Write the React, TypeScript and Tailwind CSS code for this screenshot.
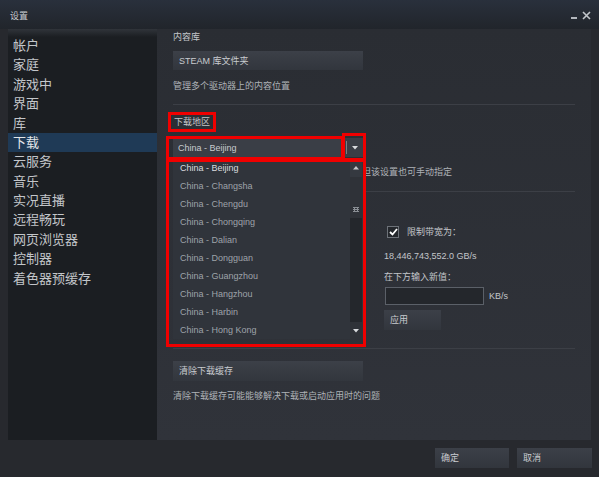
import React from "react";

const navItems = [
  "帐户",
  "家庭",
  "游戏中",
  "界面",
  "库",
  "下载",
  "云服务",
  "音乐",
  "实况直播",
  "远程畅玩",
  "网页浏览器",
  "控制器",
  "着色器预缓存",
];

const regions = [
  "China - Beijing",
  "China - Changsha",
  "China - Chengdu",
  "China - Chongqing",
  "China - Dalian",
  "China - Dongguan",
  "China - Guangzhou",
  "China - Hangzhou",
  "China - Harbin",
  "China - Hong Kong",
];

const TriDown = () => (
  <svg width="6" height="4" viewBox="0 0 6 4">
    <polygon points="0,0 6,0 3,3.5" fill="#d8dadd" />
  </svg>
);

const TriUp = () => (
  <svg width="6" height="4" viewBox="0 0 6 4">
    <polygon points="0,3.5 6,3.5 3,0" fill="#c4c7ca" />
  </svg>
);

const SteamButton = ({ label, className = "" }: { label: string; className?: string }) => (
  <div
    className={`flex items-center pl-[6px] bg-gradient-to-b from-[#3c4048] to-[#32363d] text-[#c9ccd0] ${className}`}
  >
    {label}
  </div>
);

export default function App() {
  return (
    <div className="w-[599px] h-[477px] flex flex-col overflow-hidden bg-[#27292e] text-[#c3c6ca] font-['Liberation_Sans','Noto_Sans_CJK_SC',sans-serif]">
      {/* Title bar */}
      <div className="h-[29px] flex items-center justify-between pl-[10px] pr-[8px] bg-gradient-to-b from-[#29303c] to-[#21252b]">
        <span className="text-[9px] leading-[12px] text-[#c9ccd0] mt-[2px]">设置</span>
        <div className="flex items-end gap-[5px] mt-[2px]">
          <div className="w-[6px] h-[2px] bg-[#b3b7bd] mb-[1px]" />
          <svg width="9" height="9" viewBox="0 0 9 9">
            <path d="M1 1 L8 8 M8 1 L1 8" stroke="#c2c6cb" strokeWidth="1.6" />
          </svg>
        </div>
      </div>

      {/* Body */}
      <div className="flex h-[411px] px-[8px]">
        {/* Sidebar */}
        <div className="w-[149px] pt-[7px] bg-[linear-gradient(#30343a,#1b1e22_8px)]">
          {navItems.map((item) => (
            <div
              key={item}
              className={`h-[19.4px] flex items-center pl-[5px] text-[13px] ${
                item === "下载" ? "bg-[#1f3a56] text-[#e3e6e9]" : "text-[#c3c6ca]"
              }`}
            >
              {item}
            </div>
          ))}
        </div>

        {/* Content */}
        <div className="relative flex-1 px-[16px] pt-[2px] text-[9px] leading-[12px] bg-gradient-to-b from-[#2a2d33] to-[#30333a]">
          <p>内容库</p>
          <SteamButton label="STEAM 库文件夹" className="mt-[8px] w-[190px] h-[19px]" />
          <p className="mt-[10px] text-[#aeb2b7]">管理多个驱动器上的内容位置</p>
          <div className="mt-[12px] h-px bg-[#3c3f46]" />

          <p className="mt-[11px] pl-[1px]">下载地区</p>
          <div className="mt-[10px] w-[190px] h-[19px] flex items-center bg-[#3a3e46]">
            <span className="flex-1 pl-[5px] text-[#c8cbce]">China - Beijing</span>
            <div className="w-px h-[13px] bg-[#7a7f86]" />
            <div className="w-[16px] flex justify-center">
              <TriDown />
            </div>
          </div>
          {/* description mostly hidden behind the open list */}
          <p className="mt-[9px] pl-[189px] whitespace-nowrap text-[#aeb2b7]">但该设置也可手动指定</p>
          <div className="mt-[13px] h-px bg-[#3c3f46]" />

          <div className="flex">
            <div className="w-[211px]" />
            <div className="pt-[34px]">
              <div className="flex items-center h-[12px]">
                <div className="ml-[3px] w-[12px] h-[12px] flex items-center justify-center bg-[#24272c] border border-[#6d7279]">
                  <svg width="9" height="8" viewBox="0 0 9 8">
                    <path d="M1 4 L3.5 6.5 L8 1" stroke="#ffffff" strokeWidth="1.8" fill="none" />
                  </svg>
                </div>
                <span className="ml-[8px]">限制带宽为：</span>
              </div>
              <p className="mt-[12px]">18,446,743,552.0 GB/s</p>
              <p className="mt-[9px]">在下方输入新值：</p>
              <div className="mt-[4px] flex items-center">
                <div className="ml-[1px] w-[99px] h-[18px] border border-[#5b6068] bg-[#24272c]" />
                <span className="ml-[5px]">KB/s</span>
              </div>
              <SteamButton label="应用" className="mt-[5px] w-[57px] h-[20px]" />
            </div>
          </div>
          <div className="mt-[18px] h-px bg-[#3c3f46]" />

          <SteamButton label="清除下载缓存" className="mt-[12px] w-[190px] h-[20px]" />
          <p className="mt-[9px] text-[#aeb2b7]">清除下载缓存可能能够解决下载或启动应用时的问题</p>

          {/* Open dropdown list */}
          <div className="absolute left-[16px] top-[130px] w-[190px] h-[180px] flex bg-[#30343b]">
            <div className="flex-1">
              {regions.map((r, i) => (
                <div
                  key={r}
                  className={`h-[18px] flex items-center pl-[7px] ${
                    i === 0 ? "text-[#d9dcdf]" : "text-[#9ea3a9]"
                  }`}
                >
                  {r}
                </div>
              ))}
            </div>
            <div className="w-[12px] mr-[1px] flex flex-col">
              <div className="h-[18px] flex items-center justify-center bg-[#353940]">
                <TriUp />
              </div>
              <div className="h-[41px] flex items-end justify-center pb-[6px] bg-[#2f3238]">
                <svg width="6" height="5" viewBox="0 0 6 5">
                  <path d="M0 0.5 H6 M0 2.5 H6 M0 4.5 H6 M1.5 0 V5 M4.5 0 V5" stroke="#8a8e94" strokeWidth="1" />
                </svg>
              </div>
              <div className="h-[104px] bg-[#24272c]" />
              <div className="h-[17px] flex items-center justify-center bg-[#2f3238]">
                <TriDown />
              </div>
            </div>
          </div>

          {/* Red annotation boxes */}
          <div className="absolute left-[11px] top-[83px] w-[48px] h-[20px] border-[3px] border-[#f00000]" />
          <div className="absolute left-[9px] top-[107px] w-[178px] h-[24px] border-[3px] border-[#f00000]" />
          <div className="absolute left-[185px] top-[104px] w-[24px] h-[28px] border-[3px] border-[#f00000]" />
          <div className="absolute left-[9px] top-[130px] w-[200px] h-[188px] border-[3px] border-[#f00000]" />
        </div>
      </div>

      {/* Footer */}
      <div className="flex-1 flex items-start justify-end gap-[8px] pt-[8px] pr-[7px] text-[9px] leading-[12px]">
        <SteamButton label="确定" className="w-[74px] h-[20px]" />
        <SteamButton label="取消" className="w-[75px] h-[20px]" />
      </div>
    </div>
  );
}
